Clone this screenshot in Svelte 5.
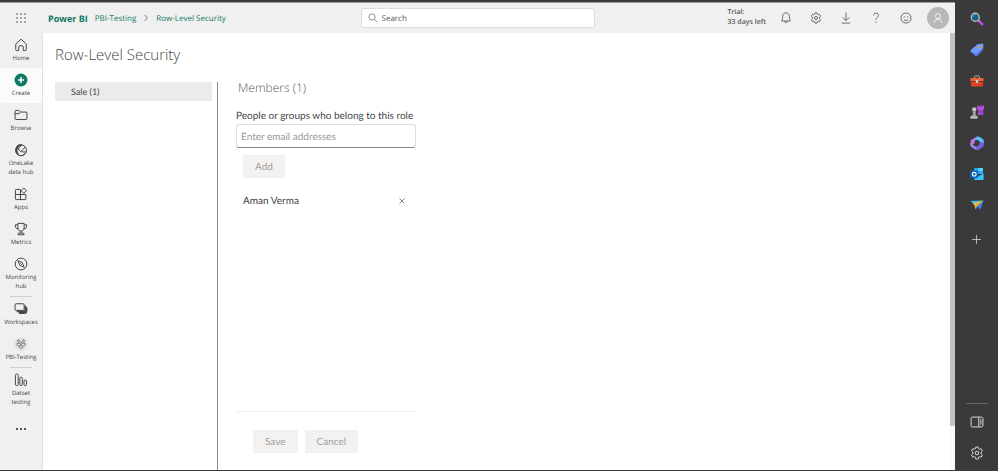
<script>
  let query = $state('');
  let email = $state('');

  const groups = [
    [
      { id: 'home', label: 'Home' },
      { id: 'create', label: 'Create', active: true },
      { id: 'browse', label: 'Browse' },
      { id: 'onelake', label: 'OneLake data hub' },
      { id: 'apps', label: 'Apps' },
      { id: 'metrics', label: 'Metrics' },
      { id: 'monitor', label: 'Monitoring hub' }
    ],
    [
      { id: 'workspaces', label: 'Workspaces' },
      { id: 'pbi', label: 'PBI-Testing' }
    ],
    [{ id: 'dataset', label: 'Datset testing' }]
  ];

  const actions = ['bell', 'gear', 'download', 'help', 'smile'];
  const tools = ['lens', 'tag', 'toolbox', 'games', 'office', 'outlook', 'drop'];
  const gearPath =
    'M8.300 1.500h3.400l.5 2.300 1.600.9 2.200-.8 1.800 3-1.800 1.600v2.900l1.800 1.600-1.800 3-2.200-.8-1.600.9-.5 2.400H8.300l-.5-2.400-1.600-.9-2.200.8-1.800-3L4 11.400V8.500L2.200 6.900l1.800-3 2.200.8 1.600-.9z';
</script>

{#snippet icon(id)}
  <svg class="icon" viewBox="0 0 20 20" aria-hidden="true">
    {#if id === 'home'}
      <path d="M2.500 8.500 10 1.800l7.500 6.700v8.300c0 .8-.4 1.200-1.200 1.200h-3.100v-5.500c0-1-.6-1.500-1.500-1.500H8.300c-.9 0-1.500.5-1.500 1.500V18H3.700c-.8 0-1.200-.4-1.200-1.200z" />
    {:else if id === 'create'}
      <circle cx="10" cy="10" r="9.300" class="green" />
      <path d="M10 5.800v8.400M5.800 10h8.400" class="white" />
    {:else if id === 'browse'}
      <path d="M1.500 15V4.800c0-.9.500-1.300 1.300-1.300h4.400l2.300 2.300h7.700c.9 0 1.300.5 1.300 1.300V15c0 .9-.5 1.400-1.300 1.400H2.800c-.8 0-1.300-.5-1.300-1.400zM1.500 8h5.700l2.300-2.200" />
    {:else if id === 'onelake'}
      <circle cx="10" cy="10.500" r="7.800" />
      <path d="M2.400 8C3 4.200 6 1.800 9.500 1.500l3.300 1.700C8.500 3.500 5.500 5.500 5 9c-.3 3 .8 5.500 2.900 8.500-4.200-1.300-6.400-5-5.500-9.500z" class="solid" />
      <path d="M5.500 7c1.500 5 5.500 6.500 12 5.500M10.500 11.500l6-6M7 9c0-2 1-4 3-5.500" />
      <path d="M9 17.500c3-.2 5.500-1.500 7.800-3.800-1.200 3.400-4.300 5-7.800 3.800z" class="solid" />
    {:else if id === 'apps'}
      <path d="M9.300 3.500H3.200C2.400 3.500 2 4 2 4.700v12.100c0 .8.400 1.200 1.200 1.200h12.600c.8 0 1.200-.4 1.200-1.200v-6.100H2M9.300 4v14M14 1.400l3.800 3.800L14 9 10.200 5.200z" />
    {:else if id === 'metrics'}
      <path d="M5.500 2h9v6c0 3.200-1.500 5-4.500 5s-4.500-1.800-4.500-5zM5.500 4H2v2c0 2.400 1.300 3.600 4 3.600M14.500 4H18v2c0 2.400-1.300 3.600-4 3.600M10 13v3M5.800 18.200v-1.400c0-.7.4-1 1.200-1h6c.8 0 1.200.3 1.200 1v1.400z" />
    {:else if id === 'monitor'}
      <circle cx="10" cy="10" r="8.400" />
      <path d="m5.500 5.500 6 2 3 7-6-2.300zM9 9l2 2" />
    {:else if id === 'workspaces'}
      <rect x="1.500" y="2.500" width="13" height="9.500" rx="1.500" />
      <path d="M16.200 5v6.500c0 1.500-.8 2.200-2.200 2.200H4M18 7.500v5.200c0 2-1.200 3.200-3.200 3.200H7" class="thick" />
    {:else if id === 'pbi'}
      <circle cx="10" cy="10" r="9.900" class="badge" />
      <g class="thin"><circle cx="6.500" cy="5.500" r="1.500" /><circle cx="13.500" cy="5.500" r="1.500" /><circle cx="10" cy="9" r="1.600" /><path d="M7.700 9H4.300v2c0 1 .6 1.600 1.800 1.600M12.300 9h3.400v2c0 1-.6 1.600-1.800 1.600M7.300 12.500h5.400v1.500c0 3-5.400 3-5.400 0z" /></g>
    {:else if id === 'dataset'}
      <rect x="2" y="1.500" width="4" height="16.500" rx="1.800" /><rect x="8.300" y="6" width="3.600" height="12" rx="1.700" /><rect x="14.300" y="10" width="3.500" height="8" rx="1.600" />
    {:else if id === 'bell'}
      <path d="M10 1.500c-3.400 0-5.700 2.500-5.700 5.800V11l-1.600 4h14.600l-1.600-4V7.300c0-3.300-2.300-5.800-5.700-5.800zM7.500 15c.2 1.800 1 2.800 2.500 2.800s2.300-1 2.500-2.800" />
    {:else if id === 'gear'}
      <path d={gearPath} /><circle cx="10" cy="10" r="2.600" />
    {:else if id === 'download'}
      <path d="M10 1v13M4.500 9l5.500 5.500L15.500 9M3 18.500h14" />
    {:else if id === 'help'}
      <path d="M6 5.800C6.100 3.200 7.600 1.800 10 1.800s4 1.500 4 3.800c0 3.600-4 3.700-4 7.400" /><circle cx="10" cy="17" r="1" class="solid" />
    {:else if id === 'smile'}
      <circle cx="10" cy="10" r="8.400" /><circle cx="7.200" cy="8" r="1" class="solid" /><circle cx="12.800" cy="8" r="1" class="solid" /><path d="M6.300 12.200c1.800 2.500 5.600 2.500 7.400 0" />
    {:else if id === 'search'}
      <circle cx="8" cy="8" r="6.300" /><path d="m12.500 12.500 6 6" />
    {:else if id === 'person'}
      <circle cx="10" cy="7" r="4.300" /><path d="M3.500 18.500c0-4 2.500-6.500 6.500-6.500s6.500 2.500 6.500 6.500" />
    {:else if id === 'panel'}
      <rect x="1.500" y="3" width="17" height="14" rx="2" /><path d="M12.500 3v14M15.500 6v8" />
    {:else if id === 'plus'}
      <path d="M10 2v16M2 10h16" />
    {/if}
  </svg>
{/snippet}

{#snippet tool(id)}
  <svg class="tool" viewBox="0 0 28 28" aria-hidden="true">
    {#if id === 'lens'}
      <path d="m18 18 6.500 6.500" stroke="#c044ee" stroke-width="5" stroke-linecap="round" />
      <path d="m15 15 4 4" stroke="#aaa" stroke-width="3" />
      <circle cx="10.500" cy="10.500" r="8" fill="#16628c" stroke="#bcbcbc" stroke-width="2.600" />
      <path d="M6 10c0-3 2-5 5-5" stroke="#4fa3c8" stroke-width="2" fill="none" />
    {:else if id === 'tag'}
      <path d="M15 2.500 25.500 1 27 2.500l-.8 11L14 25.600c-1 1-2.200 1-3.200 0L1.500 17c-1-1-1-2.200 0-3.200z" fill="#6c9cff" />
      <path d="M2 18l9 7.500c1 .8 2 .8 3 0L26 13.500V9L13 22z" fill="#5b72e9" />
      <circle cx="20" cy="8" r="3" fill="#f0b32c" /><circle cx="20" cy="8" r="1.200" fill="#654323" />
    {:else if id === 'toolbox'}
      <path d="M9 8V5.500C9 4.500 9.600 4 10.600 4h6.800c1 0 1.600.5 1.600 1.500V8" fill="none" stroke="#aaa" stroke-width="2" />
      <rect x="1" y="8" width="26" height="8" rx="2" fill="#ef653b" /><path d="M2 15h24v8c0 1-.7 2-2 2H4c-1.300 0-2-1-2-2z" fill="#d9441f" />
      <path d="M1 14h26v2H1z" fill="#842915" /><rect x="11.500" y="12" width="5" height="6" rx="1" fill="#d0d0d0" />
    {:else if id === 'games'}
      <path d="M14 1h3v2h3V1h3v2h2V1h3v7l-2 2 1 10H16l1-10-3-2z" fill="#b64be2" /><path d="M18 10h7l1 10h-6z" fill="#9a3fd0" />
      <circle cx="8.500" cy="9" r="4.300" fill="#c4c4c4" /><path d="M5 13h7v2l-1 1c0 3 1 5 4 7v4H1v-4c4-2 5-4 5-7l-1-1z" fill="#a0a0a0" /><path d="M1 23h14v4H1z" fill="#bdbdbd" />
    {:else if id === 'office'}
      <path d="M14 1 4 7C2 8 1 9.500 1 12v8l9-6V9l9-5-3-3z" fill="#bd7be8" />
      <path d="M14 1c2-.5 3 0 4 .5l7 4.500c1.500 1 2 2 2 4v9l-8-5v-4l-9-5z" fill="#4aa3ee" />
      <path d="M1 13c0 2 1 3 3 4l8 5 7-4v-4l8 5c0 1-1 2-2 3l-8 5c-2 1-4 1-6 0l-8-5c-1-.7-2-2-2-4z" fill="#a08cf8" />
      <path d="m12 22 7-4v-4l8-5v10c0 1-1 2-2 3l-8 5c-2 1-4 1-5 0z" fill="#6f63dc" />
      <path d="M18 1.500 25 6c1.500 1 2 2 2 4v4l-8-4-9-4z" fill="#5ac3ee" />
      <path d="m14 8 5 3v6l-5 3-5-3v-6z" fill="#3a3a3a" />
    {:else if id === 'outlook'}
      <path d="M10 2h14c1 0 2 1 2 2v10H8V4c0-1 1-2 2-2z" fill="#27a9ea" /><path d="M17 2h7c1 0 2 1 2 2v4h-9z" fill="#55d9ff" />
      <path d="M8 13l9 5 10-5v11c0 1-1 2-2 2H10c-1 0-2-1-2-2z" fill="#168dd9" /><path d="M8 25 27 13v11c0 1-1 2-2 2H10z" fill="#35c5f4" />
      <rect x="1" y="7" width="15" height="15" rx="2" fill="#0868bd" /><circle cx="8.500" cy="14.500" r="3.800" fill="none" stroke="#fff" stroke-width="2.200" />
    {:else if id === 'drop'}
      <path d="M1 6 27 5 9 14z" fill="#42bff5" /><path d="M27 5 13 15l8 8z" fill="#347fe8" />
      <path d="M6 11 27 5 9 15z" fill="#ffc52f" /><path d="M27 5 9 15l2 8 3-6z" fill="#f5ae25" /><path d="m11 23 3-7 3 3z" fill="#2c68c8" />
    {/if}
  </svg>
{/snippet}

<div class="frame">
  <div class="app">
    <header>
      <button class="waffle" aria-label="App launcher">
        <svg viewBox="0 0 10 10" aria-hidden="true">
          {#each [1, 5, 9] as y}{#each [1, 5, 9] as x}<circle cx={x} cy={y} r=".8" />{/each}{/each}
        </svg>
      </button>
      <div class="top">
        <nav class="crumbs" aria-label="Breadcrumb">
          <a class="brand" href="#home">Power BI</a>
          <a href="#workspace">PBI-Testing</a>
          <svg class="chevron" viewBox="0 0 6 8" aria-hidden="true"><path d="m1.500 1 3 3-3 3" /></svg>
          <a href="#security">Row-Level Security</a>
        </nav>
        <label class="search">
          {@render icon('search')}
          <input type="search" placeholder="Search" aria-label="Search" bind:value={query} />
        </label>
        <div class="actions">
          <span class="trial">Trial:<br />33 days left</span>
          {#each actions as id}
            <button aria-label={id}>{@render icon(id)}</button>
          {/each}
          <button class="avatar" aria-label="Account">{@render icon('person')}</button>
        </div>
      </div>
    </header>

    <div class="body">
      <nav class="rail" aria-label="Main">
        {#each groups as group}
          <div class="group">
            {#each group as item}
              <a href="#{item.id}" class:active={item.active}>{@render icon(item.id)}<span>{item.label}</span></a>
            {/each}
          </div>
        {/each}
        <button class="more" aria-label="More"><i></i><i></i><i></i></button>
      </nav>

      <main>
        <h1>Row-Level Security</h1>
        <div class="panes">
          <div class="roles"><button class="role">Sale (1)</button></div>
          <section>
            <h2>Members (1)</h2>
            <label class="caption" for="email">People or groups who belong to this role</label>
            <input id="email" type="text" placeholder="Enter email addresses" bind:value={email} />
            <button class="btn add">Add</button>
            <div class="member">
              <span>Aman Verma</span>
              <button aria-label="Remove Aman Verma">
                <svg viewBox="0 0 6 6" aria-hidden="true"><path d="m.5.5 5 5m0-5-5 5" /></svg>
              </button>
            </div>
            <div class="footer">
              <button class="btn">Save</button>
              <button class="btn">Cancel</button>
            </div>
          </section>
        </div>
      </main>
      <div class="scroll"><div class="thumb"></div></div>
    </div>
  </div>

  <aside>
    {#each tools as id}
      <button aria-label={id}>{@render tool(id)}</button>
    {/each}
    <button class="plus" aria-label="Add tool">{@render icon('plus')}</button>
    <hr />
    <button aria-label="Toggle panel">{@render icon('panel')}</button>
    <button aria-label="Settings">{@render icon('gear')}</button>
  </aside>
</div>

<style>
  .frame, .frame * { box-sizing: border-box; }
  .frame {
    display: flex;
    min-height: 100vh;
    padding: 2px 0 1px;
    background: #3a3a3a;
    color: #444;
    font-family: "Open Sans", "Noto Sans", sans-serif;
    font-size: 10px;
    text-rendering: geometricPrecision;
  }
  button { display: flex; align-items: center; justify-content: center; padding: 0; border: 0; background: none; color: inherit; font: inherit; text-rendering: inherit; }
  input { text-rendering: inherit; }
  a { color: inherit; text-decoration: none; }
  .icon { display: block; flex: none; width: 14px; height: 14px; fill: none; stroke: currentColor; stroke-width: 1.4; stroke-linejoin: round; }
  .icon .green { fill: #117865; stroke: none; }
  .icon .white { stroke: #fff; stroke-width: 2; }
  .icon .solid { fill: currentColor; stroke: none; }
  .icon .thick { stroke-width: 2.2; }
  .icon .badge { fill: #e3e3e3; stroke: none; }
  .icon .thin { stroke: #666; stroke-width: 1.2; }

  .app { flex: 1; display: flex; flex-direction: column; min-width: 0; border-top: 1px solid #999; background: #f0f0f0; }
  header { display: flex; height: 30px; }
  .waffle { position: relative; z-index: 1; flex: none; width: 42px; }
  .waffle svg { width: 10px; height: 10px; fill: #444; }
  .top { flex: 1; display: grid; grid-template-columns: minmax(0, 1fr) 234px minmax(0, 1fr); align-items: center; margin-left: -42px; }
  .crumbs { display: flex; align-items: center; gap: 7px; padding-left: 48px; color: #117865; font: 9px Lato, "Open Sans", sans-serif; white-space: nowrap; }
  .crumbs a { font-family: "Open Sans", sans-serif; font-size: 8px; }
  .crumbs .brand { font-size: 9px; font-weight: 700; }
  .chevron { width: 6px; height: 8px; fill: none; stroke: #777; stroke-width: 1; }
  .search { display: flex; align-items: center; gap: 4px; height: 20px; padding: 0 6px; border: 1px solid #ddd; border-radius: 3px; background: #fff; color: #666; }
  .search .icon { width: 10px; height: 10px; }
  .search input { flex: 1; min-width: 0; padding: 0; border: 0; outline: 0; background: none; font: inherit; font-size: 8px; }
  .search input::placeholder { color: #555; opacity: 1; }
  .actions { display: flex; align-items: center; justify-content: flex-end; padding-right: 6px; }
  .actions button { width: 30px; height: 22px; color: #555; }
  .actions .icon { width: 12px; height: 12px; }
  .trial { margin-right: 5px; font-size: 7px; line-height: 10px; font-weight: 600; color: #555; white-space: nowrap; }
  .actions .avatar { width: 22px; margin-left: 6px; border-radius: 50%; background: #b8b8b8; color: #fff; }

  .body { flex: 1; display: flex; min-height: 0; }
  .rail { flex: none; width: 43px; border-right: 1px solid #e0e0e0; color: #444; }
  .group + .group::before { content: ""; display: block; width: 22px; height: 1px; margin: 0 auto; background: #d0d0d0; }
  .rail a { display: flex; flex-direction: column; align-items: center; gap: 2px; padding: 5px 4px; font-size: 6px; line-height: 9px; text-align: center; }
  .rail .active { border-radius: 3px; background: #fbfbfb; }
  .more { width: 100%; height: 34px; gap: 2px; }
  .more i { width: 2px; height: 2px; border-radius: 50%; background: #222; }

  main { flex: 1; display: flex; flex-direction: column; min-width: 0; padding: 11px 12px 0; background: #fff; }
  h1, h2 { margin: 0; font-family: "Open Sans", sans-serif; font-weight: 300; color: #444; }
  h1 { font-size: 15px; line-height: 22px; }
  .panes { flex: 1; display: flex; margin-top: 16px; font-family: Lato, "Open Sans", sans-serif; }
  .roles { width: 163px; padding-right: 5px; border-right: 1px solid #888; }
  .role { width: 100%; height: 19px; padding-left: 16px; justify-content: flex-start; background: #ebebeb; font-size: 9px; }
  section { display: flex; flex-direction: column; width: 198px; padding-left: 18px; }
  h2 { padding-left: 2px; font-size: 12px; line-height: 12px; color: #555; }
  .caption { margin-top: 14px; font-size: 10px; line-height: 16px; white-space: nowrap; }
  section input { width: 100%; height: 24px; padding: 1px 5px 0 4px; border: 1px solid #ddd; border-bottom-color: #888; border-radius: 3px; outline: 0; font: inherit; font-size: 10px; }
  section input::placeholder { color: #999; opacity: 1; }
  .btn { height: 23px; padding: 1px 12px 0; background: #f3f2f1; color: #a19f9d; font-size: 10px; }
  .add { align-self: flex-start; margin: 7px 0 0 7px; }
  .member { display: flex; align-items: center; justify-content: space-between; margin-top: 15px; padding: 0 11px 0 7px; line-height: 16px; }
  .member svg { display: block; width: 6px; height: 6px; stroke: #666; stroke-width: .8; }
  .footer { display: flex; gap: 7px; margin-top: auto; padding: 18px 0 17px 17px; border-top: 1px solid #eee; }
  .scroll { flex: none; width: 5px; background: #fafafa; }
  .thumb { height: 90%; background: #c4c4c4; }

  aside { flex: none; display: flex; flex-direction: column; align-items: center; width: 43px; padding: 1px 0 2px; color: #ddd; }
  aside button { width: 31px; height: 31px; }
  .tool { width: 14px; height: 14px; }
  .plus { margin-top: 4px; }
  .plus .icon { width: 11px; height: 11px; }
  hr { width: 22px; margin: auto 0 2px; border: 0; border-top: 1px solid #666; }
</style>
